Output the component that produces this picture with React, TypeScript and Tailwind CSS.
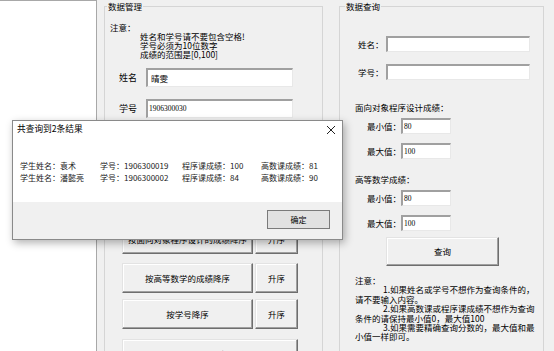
const sunken =
  "bg-white border-t-2 border-l-2 border-b border-r border-t-[#a0a0a0] border-l-[#a0a0a0] border-b-[#e8e8e8] border-r-[#e8e8e8]";
const raised =
  "bg-[#f0f0f0] border border-t-[#e3e3e3] border-l-[#e3e3e3] border-b-[#6e6e6e] border-r-[#6e6e6e] shadow-[inset_-1px_-1px_0_#a0a0a0,inset_1px_1px_0_#ffffff] flex items-center justify-center";

const QueryRow = ({ label, value }: { label: string; value: string }) => (
  <div className="flex items-center pl-[27px]">
    <span className="w-[34px]">{label}</span>
    <div className={`${sunken} w-[50px] h-[16px] flex items-center pl-[1px] text-[7.5px] font-['Liberation_Serif',serif]`}>
      {value}
    </div>
  </div>
);

const results = [
  { name: "袁术", id: "1906300019", prog: "100", math: "81" },
  { name: "潘懿亮", id: "1906300002", prog: "84", math: "90" },
];

const App = () => {
  return (
    <div className="w-[554px] h-[351px] bg-[#f0f0f0] relative overflow-hidden flex items-start text-[8.5px] text-black font-['Noto_Sans_CJK_SC',sans-serif]">
      <div className="w-[97px] h-full shrink-0 bg-white border-t border-r border-[#a8a8a8]"></div>

      {/* 数据管理 */}
      <fieldset className="ml-[7px] w-[219px] h-[420px] shrink-0 border border-[#d5d5d5]">
        <legend className="ml-[2px] px-[1px] leading-[12px]">数据管理</legend>
        <div className="pl-[5px] mt-[11px] leading-[9px]">注意：</div>
        <div className="pl-[35px] leading-[9px]">
          <div>姓名和学号请不要包含空格!</div>
          <div>学号必须为10位数字</div>
          <div>成绩的范围是[0,100]</div>
        </div>
        <div className="flex items-center pl-[14px] mt-[9px]">
          <span className="w-[27px] text-[9px]">姓名</span>
          <div className={`${sunken} w-[147px] h-[19px] flex items-center pl-[3px]`}>晴雯</div>
        </div>
        <div className="flex items-center pl-[14px] mt-[12px]">
          <span className="w-[27px] text-[9px]">学号</span>
          <div className={`${sunken} w-[147px] h-[19px] flex items-center pl-[1px] text-[7.5px] font-['Liberation_Serif',serif]`}>
            1906300030
          </div>
        </div>
        {/* area hidden under the dialog */}
        <div className="h-[97px]"></div>
        <div className="flex gap-[2px] pl-[17px] mt-[9px]">
          <div className={`${raised} w-[131px] h-[30px]`}>按面向对象程序设计的成绩降序</div>
          <div className={`${raised} w-[43px] h-[30px]`}>升序</div>
        </div>
        <div className="flex gap-[2px] pl-[17px] mt-[9px]">
          <div className={`${raised} w-[131px] h-[30px]`}>按高等数学的成绩降序</div>
          <div className={`${raised} w-[43px] h-[30px]`}>升序</div>
        </div>
        <div className="flex gap-[2px] pl-[17px] mt-[6px]">
          <div className={`${raised} w-[131px] h-[30px]`}>按学号降序</div>
          <div className={`${raised} w-[43px] h-[30px]`}>升序</div>
        </div>
        <div className="pl-[17px] mt-[10px]">
          <div className={`${raised} w-[176px] h-[30px]`}>刷新列表</div>
        </div>
      </fieldset>

      {/* 数据查询 */}
      <fieldset className="ml-[16px] w-[205px] h-[420px] shrink-0 border border-[#d5d5d5]">
        <legend className="ml-[5px] px-[1px] leading-[12px]">数据查询</legend>
        <div className="flex items-center pl-[18px] mt-[24px]">
          <span className="w-[28px]">姓名：</span>
          <div className={`${sunken} w-[144px] h-[16px]`}></div>
        </div>
        <div className="flex items-center pl-[18px] mt-[12px]">
          <span className="w-[28px]">学号：</span>
          <div className={`${sunken} w-[144px] h-[16px]`}></div>
        </div>
        <div className="pl-[15px] mt-[23px] leading-[9px]">面向对象程序设计成绩：</div>
        <div className="mt-[6px]">
          <QueryRow label="最小值：" value="80" />
        </div>
        <div className="mt-[9px]">
          <QueryRow label="最大值：" value="100" />
        </div>
        <div className="pl-[15px] mt-[16px] leading-[9px]">高等数学成绩：</div>
        <div className="mt-[6px]">
          <QueryRow label="最小值：" value="80" />
        </div>
        <div className="mt-[9px]">
          <QueryRow label="最大值：" value="100" />
        </div>
        <div className="pl-[46px] mt-[6px]">
          <div className={`${raised} w-[113px] h-[29px]`}>查询</div>
        </div>
        <div className="pl-[15px] mt-[10px] leading-[9.4px] whitespace-nowrap">
          <div>注意：</div>
          <div className="pl-[28px]">1.如果姓名或学号不想作为查询条件的，</div>
          <div>请不要输入内容。</div>
          <div className="pl-[28px]">2.如果高数课或程序课成绩不想作为查询</div>
          <div>条件的请保持最小值0，最大值100</div>
          <div className="pl-[28px]">3.如果需要精确查询分数的，最大值和最</div>
          <div>小值一样即可。</div>
        </div>
      </fieldset>

      {/* 查询结果对话框 */}
      <div className="absolute left-[12px] top-[120px] w-[331px] h-[120px] flex flex-col bg-white border border-[#8a8a8a] shadow-[2px_3px_8px_rgba(0,0,0,0.3)] text-[8.7px]">
        <div className="h-[16px] flex items-center justify-between pl-[4px] pr-[6px]">
          <span>共查询到2条结果</span>
          <svg width="10" height="10" viewBox="0 0 10 10" className="mt-[2px]">
            <path d="M1 1L9 9M9 1L1 9" stroke="#222" strokeWidth="1" />
          </svg>
        </div>
        <div className="flex-1 pt-[23px] pl-[7px] text-[8px] text-[#1a1a1a]">
          {results.map((r) => (
            <div key={r.id} className="grid grid-cols-[80px_82px_79px_auto] leading-[12px] whitespace-nowrap">
              <span>学生姓名：{r.name}</span>
              <span>学号：{r.id}</span>
              <span>程序课成绩：{r.prog}</span>
              <span>高数课成绩：{r.math}</span>
            </div>
          ))}
        </div>
        <div className="h-[37px] bg-[#f0f0f0] flex justify-end pt-[8px] pr-[12px]">
          <div className="w-[63px] h-[19px] bg-[#e1e1e1] border border-[#7a7a7a] flex items-center justify-center text-[8px]">
            确定
          </div>
        </div>
      </div>
    </div>
  );
};

export default App;
